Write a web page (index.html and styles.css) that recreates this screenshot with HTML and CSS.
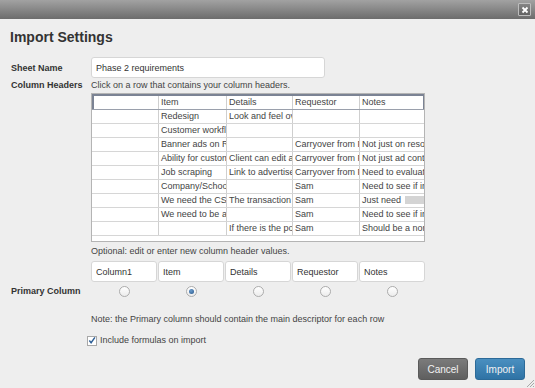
FILE: index.html
```html
<!DOCTYPE html>
<html lang="en">

<head>
    <meta charset="UTF-8">
    <meta name="viewport" content="width=device-width, initial-scale=1.0">
    <title>Import Settings</title>
    <link rel="stylesheet" href="styles.css">
</head>

<body>
    <div class="dialog">
        <!-- Title bar -->
        <div class="titlebar">
            <button class="close-btn" aria-label="Close">
                <svg width="8" height="8" viewBox="0 0 8 8"><path d="M1.5 1.5L6.5 6.5M6.5 1.5L1.5 6.5" stroke="#fff" stroke-width="1.8" /></svg>
            </button>
        </div>

        <div class="dialog-body">
            <h1 class="dialog-title">Import Settings</h1>

            <div class="form-row sheet-row">
                <label class="row-label">Sheet Name</label>
                <input class="text-input sheet-input" type="text" value="Phase 2 requirements">
            </div>

            <div class="form-row help-row">
                <span class="row-label">Column Headers</span>
                <span class="help-text">Click on a row that contains your column headers.</span>
            </div>

            <div class="form-row">
                <span class="row-label"></span>
                <div class="sheet-table">
                    <div class="sheet-row-item selected">
                        <div class="cell"></div>
                        <div class="cell">Item</div>
                        <div class="cell">Details</div>
                        <div class="cell">Requestor</div>
                        <div class="cell">Notes</div>
                    </div>
                    <div class="sheet-row-item">
                        <div class="cell"></div>
                        <div class="cell">Redesign</div>
                        <div class="cell">Look and feel overhaul</div>
                        <div class="cell"></div>
                        <div class="cell"></div>
                    </div>
                    <div class="sheet-row-item">
                        <div class="cell"></div>
                        <div class="cell">Customer workflow</div>
                        <div class="cell"></div>
                        <div class="cell"></div>
                        <div class="cell"></div>
                    </div>
                    <div class="sheet-row-item">
                        <div class="cell"></div>
                        <div class="cell">Banner ads on Resources</div>
                        <div class="cell"></div>
                        <div class="cell">Carryover from Phase 1</div>
                        <div class="cell">Not just on resources</div>
                    </div>
                    <div class="sheet-row-item">
                        <div class="cell"></div>
                        <div class="cell">Ability for customers</div>
                        <div class="cell">Client can edit ads</div>
                        <div class="cell">Carryover from Phase 1</div>
                        <div class="cell">Not just ad content</div>
                    </div>
                    <div class="sheet-row-item">
                        <div class="cell"></div>
                        <div class="cell">Job scraping</div>
                        <div class="cell">Link to advertiser</div>
                        <div class="cell">Carryover from Phase 1</div>
                        <div class="cell">Need to evaluate</div>
                    </div>
                    <div class="sheet-row-item">
                        <div class="cell"></div>
                        <div class="cell">Company/School pages</div>
                        <div class="cell"></div>
                        <div class="cell">Sam</div>
                        <div class="cell">Need to see if in scope</div>
                    </div>
                    <div class="sheet-row-item">
                        <div class="cell"></div>
                        <div class="cell">We need the CSV</div>
                        <div class="cell">The transaction report</div>
                        <div class="cell">Sam</div>
                        <div class="cell">Just need <span class="blurred"></span></div>
                    </div>
                    <div class="sheet-row-item">
                        <div class="cell"></div>
                        <div class="cell">We need to be able</div>
                        <div class="cell"></div>
                        <div class="cell">Sam</div>
                        <div class="cell">Need to see if in scope</div>
                    </div>
                    <div class="sheet-row-item">
                        <div class="cell"></div>
                        <div class="cell"></div>
                        <div class="cell">If there is the possibility</div>
                        <div class="cell">Sam</div>
                        <div class="cell">Should be a non issue</div>
                    </div>
                </div>
            </div>

            <div class="form-row help-row optional-row">
                <span class="row-label"></span>
                <span class="help-text">Optional: edit or enter new column header values.</span>
            </div>

            <div class="form-row">
                <span class="row-label"></span>
                <div class="header-inputs">
                    <input class="text-input" type="text" value="Column1">
                    <input class="text-input" type="text" value="Item">
                    <input class="text-input" type="text" value="Details">
                    <input class="text-input" type="text" value="Requestor">
                    <input class="text-input" type="text" value="Notes">
                </div>
            </div>

            <div class="form-row primary-row">
                <span class="row-label">Primary Column</span>
                <div class="header-radios">
                    <span class="radio-cell"><input type="radio" name="primary"></span>
                    <span class="radio-cell"><input type="radio" name="primary" checked></span>
                    <span class="radio-cell"><input type="radio" name="primary"></span>
                    <span class="radio-cell"><input type="radio" name="primary"></span>
                    <span class="radio-cell"><input type="radio" name="primary"></span>
                </div>
            </div>

            <div class="form-row help-row note-row">
                <span class="row-label"></span>
                <span class="help-text">Note: the Primary column should contain the main descriptor for each row</span>
            </div>

            <div class="form-row help-row check-row">
                <span class="row-label"></span>
                <label class="check-label">
                    <span class="check-box">
                        <svg width="9" height="9" viewBox="0 0 9 9"><path d="M1.5 4.5L3.5 7L7.8 1" fill="none" stroke="#2e5f96" stroke-width="1.6" /></svg>
                    </span>
                    Include formulas on import
                </label>
            </div>

            <div class="dialog-footer">
                <button class="btn btn-cancel">Cancel</button>
                <button class="btn btn-import">Import</button>
            </div>
        </div>

        <!-- Resize grip -->
        <svg class="resize-grip" width="9" height="9" viewBox="0 0 9 9">
            <path d="M8 1L1 8M8 4L4 8M8 7L7 8" stroke="#a8a8a8" stroke-width="1" />
        </svg>
    </div>
</body>

</html>
```

FILE: styles.css
```css
body {
    font-family: "Liberation Sans", Arial, sans-serif;
    font-size: 9px;
    color: #444;
    background-color: #eeeeee;
    margin: 0;
    padding: 0;
}

.dialog {
    position: relative;
    height: 388px;
    overflow: hidden;
}

/* Title bar */
.titlebar {
    height: 19px;
    background: linear-gradient(#a2a2a2, #6c6c6c);
    display: flex;
    justify-content: flex-end;
    align-items: center;
    padding-right: 4px;
}

.close-btn {
    box-sizing: border-box;
    width: 13px;
    height: 13px;
    padding: 0;
    border: 1px solid #bdbdbd;
    border-radius: 1px;
    background: linear-gradient(#858585, #626262);
    display: flex;
    justify-content: center;
    align-items: center;
    cursor: pointer;
}

.dialog-body {
    padding: 0 10px 0 11px;
}

.dialog-title {
    font-size: 14px;
    line-height: 18px;
    font-weight: bold;
    color: #333;
    margin: 9px 0 0 -1px;
}

/* Form rows */
.form-row {
    display: flex;
    align-items: center;
}

.row-label {
    width: 80px;
    flex-shrink: 0;
    font-weight: bold;
    color: #333;
}

.sheet-row {
    margin-top: 11px;
}

.help-row {
    line-height: 15px;
}

.help-text {
    color: #444;
}

.text-input {
    box-sizing: border-box;
    height: 21px;
    border: 1px solid #d6d6d6;
    border-radius: 3px;
    background-color: #fff;
    font-family: inherit;
    font-size: 9px;
    color: #333;
    padding: 0 4px;
    margin: 0;
    outline: none;
}

.sheet-input {
    width: 234px;
}

/* Sheet preview */
.sheet-table {
    box-sizing: border-box;
    width: 334px;
    height: 149px;
    border: 1px solid #b4b4b4;
    background-color: #fff;
    overflow: hidden;
}

.sheet-row-item {
    display: grid;
    grid-template-columns: 67px 68px 66px 67px 1fr;
    height: 14px;
    border-bottom: 1px solid #d6d6d6;
    box-sizing: border-box;
}

.sheet-row-item.selected {
    height: 16px;
    border-top: 2px solid #7b8394;
    border-bottom-color: #9aa0ac;
    box-shadow: inset 2px 0 0 #7b8394, inset -1px 0 0 #7b8394;
}

.cell {
    box-sizing: border-box;
    border-right: 1px solid #cfcfcf;
    padding-left: 2px;
    line-height: 13px;
    white-space: nowrap;
    overflow: hidden;
    color: #444;
}

.cell:last-child {
    border-right: none;
}

.blurred {
    display: inline-block;
    width: 28px;
    height: 8px;
    margin-left: 1px;
    vertical-align: -1px;
    background-color: #d4d4d4;
}

.optional-row {
    margin-top: 2px;
}

.header-inputs {
    display: flex;
    gap: 1px;
    margin-top: 2px;
}

.header-inputs .text-input {
    width: 66px;
}

.primary-row {
    margin-top: 2px;
    height: 14px;
}

.header-radios {
    display: flex;
    gap: 1px;
}

.radio-cell {
    width: 66px;
    display: flex;
    justify-content: center;
}

.radio-cell input {
    appearance: none;
    -webkit-appearance: none;
    box-sizing: border-box;
    width: 11px;
    height: 11px;
    margin: 0;
    border: 1px solid #acacac;
    border-radius: 50%;
    background: linear-gradient(#fff, #ececec);
    display: flex;
    justify-content: center;
    align-items: center;
}

.radio-cell input:checked::after {
    content: "";
    width: 5px;
    height: 5px;
    border-radius: 50%;
    background: radial-gradient(circle at 40% 35%, #6a9ccc, #27558a);
}

.note-row {
    margin-top: 14px;
}

.check-row {
    margin-top: 6px;
}

.check-label {
    display: flex;
    align-items: center;
    margin-left: -4px;
    color: #444;
}

.check-box {
    box-sizing: border-box;
    width: 10px;
    height: 10px;
    border: 1px solid #a8a8a8;
    background-color: #fff;
    margin-right: 3px;
    display: flex;
    justify-content: center;
    align-items: center;
    overflow: visible;
}

.check-box svg {
    margin-top: -1px;
}

/* Footer buttons */
.dialog-footer {
    display: flex;
    justify-content: flex-end;
    gap: 7px;
    margin-top: 10px;
}

.btn {
    box-sizing: border-box;
    width: 50px;
    height: 22px;
    border: none;
    border-radius: 3px;
    font-family: inherit;
    font-size: 10px;
    color: #f2f2f2;
    cursor: pointer;
    padding: 0;
}

.btn-cancel {
    background: linear-gradient(#7b7b7b, #5f5f5f);
    border: 1px solid #5a5a5a;
}

.btn-import {
    background: linear-gradient(#4a8fc0, #2f73a5);
    border: 1px solid #2c6a98;
}

.resize-grip {
    position: absolute;
    right: 0;
    bottom: 0;
}
```
